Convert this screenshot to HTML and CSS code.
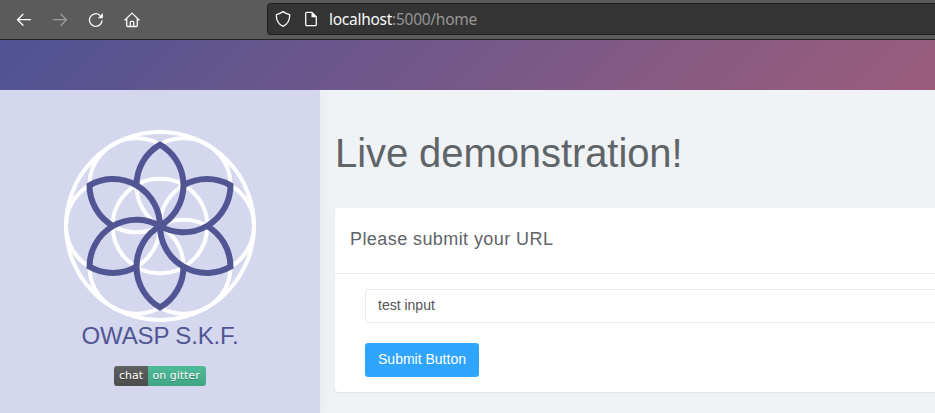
FILE: index.html
```html
<!DOCTYPE html>
<html lang="en">
<head>
<meta charset="utf-8">
<title>Live demonstration</title>
<link rel="stylesheet" href="styles.css">
</head>
<body>
<div class="toolbar">
  <div class="nav">
    <svg class="icon" viewBox="0 0 16 16"><path d="M14.500 7.700H1.500M7 2.200 1.500 7.700 7 13.200"/></svg>
    <svg class="icon disabled" viewBox="0 0 16 16"><path d="M1.500 7.700h13M9 2.200l5.500 5.500L9 13.200"/></svg>
    <svg class="icon" viewBox="0 0 16 16"><path d="M14 8.800A6.300 6.300 0 1 1 11.800 3.200"/><path class="solid" d="M14.900 1v5.200H9.700z"/></svg>
    <svg class="icon" viewBox="0 0 16 16"><path d="M.9 8 8 1.100 15.100 8M2.700 7v6.400q0 1.100 1.100 1.100h8.400q1.100 0 1.100-1.100V7M6.300 14.300v-4q0-.9.9-.9h1.600q.9 0 .9.900v4"/></svg>
  </div>
  <div class="urlbar">
    <svg class="icon" viewBox="0 0 16 16"><path d="M8 .6C6.200 2.200 4 3.200 1.300 3.700 1.200 8.800 3 13.200 8 15.300c5-2.100 6.800-6.500 6.700-11.600C12 3.200 9.800 2.200 8 .6z"/></svg>
    <svg class="icon page" viewBox="0 0 16 16"><path d="M3.700 1.400H9l4.300 4.300v7.700q0 1.200-1.200 1.200H3.900q-1.200 0-1.200-1.200v-11q0-1 1-1z"/><path class="solid" d="M8.500 1.200v5h5z"/></svg>
    <span class="url"><b>localhost</b>:5000/home</span>
  </div>
</div>
<header class="banner"></header>
<div class="layout">
  <aside class="sidebar">
    <svg class="logo" viewBox="-96 -96 192 192">
      <g class="rings">
        <circle r="94"/><circle r="47.300"/>
        <circle cx="47" r="47"/><circle cx="-47" r="47"/>
        <circle cx="23.500" cy="40.700" r="47"/><circle cx="-23.500" cy="40.700" r="47"/>
        <circle cx="23.500" cy="-40.700" r="47"/><circle cx="-23.500" cy="-40.700" r="47"/>
      </g>
      <defs><path id="petal" d="M-23.500-40.700A47 47 0 0 1 0-81.400A47 47 0 0 1 0 0"/></defs>
      <g class="petals">
        <use href="#petal"/><use href="#petal" transform="rotate(60)"/><use href="#petal" transform="rotate(120)"/>
        <use href="#petal" transform="rotate(180)"/><use href="#petal" transform="rotate(240)"/><use href="#petal" transform="rotate(300)"/>
      </g>
    </svg>
    <div class="brand">OWASP S.K.F.</div>
    <div class="badge"><span class="chat">chat</span><span class="gitter">on gitter</span></div>
  </aside>
  <main class="content">
    <h1>Live demonstration!</h1>
    <section class="card">
      <h2>Please submit your URL</h2>
      <form class="form">
        <input class="field" type="text" value="test input">
        <button class="submit" type="button">Submit Button</button>
      </form>
    </section>
  </main>
</div>
</body>
</html>
```
FILE: styles.css
```css
* { box-sizing: border-box; }
body {
  margin: 0;
  height: 413px;
  overflow: hidden;
  display: flex;
  flex-direction: column;
  background: #eff3f6;
  color: #5f6468;
  font-family: "Liberation Sans", Arial, sans-serif;
}
.toolbar {
  flex: none;
  height: 40px;
  display: flex;
  background: #5b5b5b;
  border-bottom: 1px solid #222;
}
.nav {
  width: 267px;
  flex: none;
  display: flex;
  align-items: center;
  gap: 20px;
  padding-left: 16px;
}
.icon {
  width: 16px;
  height: 16px;
  flex: none;
  fill: none;
  stroke: #fbfbfb;
  stroke-width: 1.3;
  stroke-linecap: round;
  stroke-linejoin: round;
}
.icon .solid { fill: #fbfbfb; stroke: none; }
.disabled { opacity: .4; }
.urlbar {
  flex: 1;
  height: 32px;
  margin-top: 3px;
  display: flex;
  align-items: center;
  padding-left: 7px;
  background: #343434;
  border: 1px solid #202020;
  border-right: 0;
  border-radius: 4px 0 0 4px;
}
.page { margin-left: 12px; }
.url {
  margin-left: 10px;
  font: 15.5px/20px "Noto Sans", sans-serif;
  letter-spacing: -.27px;
  color: #969696;
}
.url b { font-weight: 400; color: #fbfbfb; }
.banner {
  flex: none;
  height: 50px;
  background: linear-gradient(135deg, #505394, #9c5d7c);
}
.layout { flex: 1; display: flex; }
.sidebar {
  width: 320px;
  flex: none;
  display: flex;
  flex-direction: column;
  align-items: center;
  padding-top: 40px;
  background: #d5d7ee;
  box-shadow: 0 0 20px rgba(0, 0, 0, .05);
  clip-path: inset(0 -30px 0 0);
}
.logo { width: 192px; height: 192px; flex: none; fill: none; }
.rings { stroke: #fff; stroke-width: 4; }
.petals { stroke: #515594; stroke-width: 6; }
.brand {
  font-size: 24px;
  line-height: 28px;
  letter-spacing: -.15px;
  color: #515594;
  white-space: nowrap;
}
.badge {
  display: flex;
  width: 92px;
  height: 20px;
  margin-top: 16px;
  border-radius: 3px;
  overflow: hidden;
  font: 11px/20px "DejaVu Sans", sans-serif;
  color: #fff;
  text-shadow: 0 1px 0 rgba(1, 1, 1, .3);
}
.chat { width: 34px; padding-left: 5px; background: linear-gradient(#606060, #4d4d4d); }
.gitter { flex: 1; padding-left: 4.5px; background: linear-gradient(#4fbb98, #40a685); }
.content { flex: 1; padding: 40px 0 0 15px; }
h1 {
  margin: 0;
  font-size: 40px;
  line-height: 46px;
  font-weight: 400;
  letter-spacing: -.08px;
  white-space: nowrap;
}
.card {
  height: 184px;
  margin-top: 32px;
  background: #fff;
  border-radius: 4px 0 0 4px;
  box-shadow: 0 1px 2px rgba(0, 0, 0, .07);
}
h2 {
  margin: 0;
  height: 66px;
  padding: 20px 15px 0;
  border-bottom: 1px solid #ebedee;
  font-size: 18px;
  line-height: 22px;
  font-weight: 400;
  letter-spacing: .42px;
}
.form {
  display: flex;
  flex-direction: column;
  align-items: flex-start;
  gap: 20px;
  padding: 15px 0 0 30px;
}
.field {
  width: 100%;
  height: 34px;
  padding: 0 12px 2px;
  border: 1px solid #e9ebec;
  border-right: 0;
  border-radius: 4px 0 0 4px;
  font: 14px "Liberation Sans", Arial, sans-serif;
  color: #555;
}
.submit {
  width: 114px;
  height: 34px;
  padding: 0 0 2px;
  border: 0;
  border-radius: 3px;
  background: #30a5ff;
  color: #fff;
  font: 14px "Liberation Sans", Arial, sans-serif;
}
```
